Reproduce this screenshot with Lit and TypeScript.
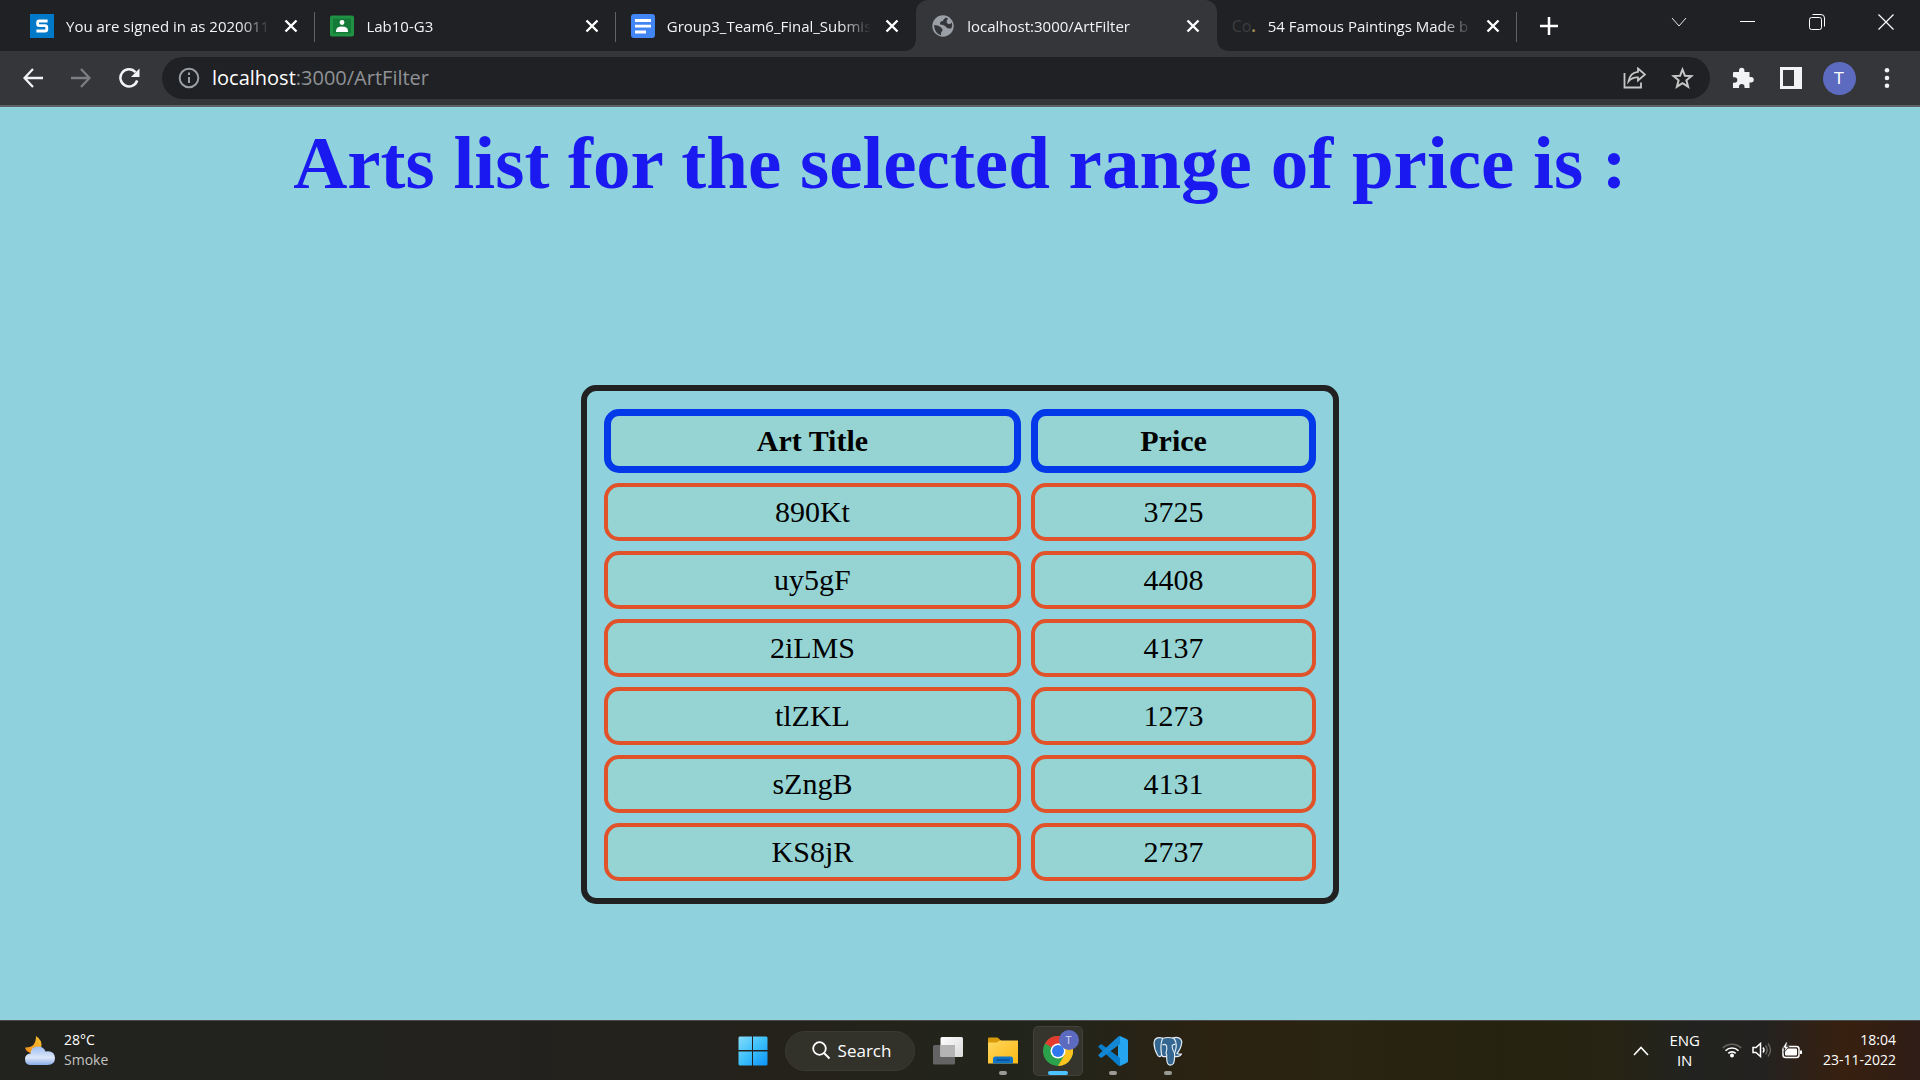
import { LitElement, html, css, svg, TemplateResult } from "lit";
import { customElement, property } from "lit/decorators.js";

const ARTS = [
  { title: "890Kt", price: 3725 },
  { title: "uy5gF", price: 4408 },
  { title: "2iLMS", price: 4137 },
  { title: "tlZKL", price: 1273 },
  { title: "sZngB", price: 4131 },
  { title: "KS8jR", price: 2737 },
];

const icon = (w: number, h: number, body: unknown) =>
  html`<svg width=${w} height=${h} viewBox="0 0 ${w} ${h}" fill="none" aria-hidden="true">${body}</svg>`;

const closeIcon = icon(14, 14, svg`<path d="M1.5 1.5 12.5 12.5M12.5 1.5 1.5 12.5" stroke="#fff" stroke-width="2.4"/>`);

interface Tab { title: string; icon: TemplateResult; active?: boolean; divider?: boolean }

const TABS: Tab[] = [
  {
    title: "You are signed in as 2020011",
    divider: true,
    icon: icon(24, 24, svg`<rect width="24" height="24" fill="#0079c9"/>
      <path d="M17.6 7H9.2Q7.6 7 7.6 8.6V10Q7.6 11.6 9.2 11.6H15Q16.8 11.6 16.8 13.4V15.2Q16.8 17 15 17H6.4" stroke="#fff" stroke-width="2.8"/>`),
  },
  {
    title: "Lab10-G3",
    divider: true,
    icon: icon(24, 24, svg`<rect y="1.500" width="24" height="21" rx="2" fill="#1f9244"/>
      <rect x="3" y="4.500" width="18" height="15" fill="#137a37"/>
      <circle cx="12" cy="8.500" r="2.400" fill="#fff"/><path d="M6 16.500Q6.500 12.500 12 12.500T18 16.500V18H6Z" fill="#fff"/>`),
  },
  {
    title: "Group3_Team6_Final_Submis",
    icon: icon(24, 24, svg`<rect width="24" height="24" rx="3" fill="#4285f4"/>
      <path d="M4 6.500H20M4 12.200H20M4 18H15" stroke="#fff" stroke-width="2.800"/>`),
  },
  {
    title: "localhost:3000/ArtFilter",
    active: true,
    icon: icon(24, 24, svg`<circle cx="12" cy="12" r="10.700" fill="#9aa0a6"/>
      <path d="M3 11Q7 11 9.500 13T11.500 16.500Q9.500 18 10 21.200Q3.500 19.500 3 11ZM15 3.500Q12 5 12 7Q8.500 7 9 10.500Q13.500 10.500 15 13Q16.500 15 20 14.500Q22 12 20.700 8.500Q19 11 16.500 9.500Q14.500 7.500 17 4.500Z" fill="#35363a"/>`),
  },
  {
    title: "54 Famous Paintings Made b",
    divider: true,
    icon: html`<span class="co">Co<b>.</b></span>`,
  },
];

@customElement("browser-tab")
class BrowserTab extends LitElement {
  @property({ attribute: false }) tab!: Tab;

  static styles = css`
    :host { display: block; flex: 1; min-width: 0; }
    .tab {
      position: relative; box-sizing: border-box; height: 51px; padding: 0 17px 0 15px;
      display: flex; align-items: center; gap: 12px; color: #f1f3f4;
      font: 15px/20px "Open Sans", "Noto Sans", sans-serif;
    }
    .active { background: #35363a; border-radius: 12px 12px 0 0; }
    .active::before, .active::after {
      content: ""; position: absolute; bottom: 0; width: 10px; height: 10px;
    }
    .active::before { right: 100%; background: radial-gradient(circle at 0 0, transparent 9px, #35363a 10px); }
    .active::after { left: 100%; background: radial-gradient(circle at 100% 0, transparent 9px, #35363a 10px); }
    .divider::after {
      content: ""; position: absolute; right: 0; top: 12px; width: 1px; height: 30px; background: #5f6368;
    }
    svg { display: block; flex: none; }
    .title {
      flex: 1; min-width: 0; overflow: hidden; white-space: nowrap;
      mask-image: linear-gradient(to right, #000 calc(100% - 32px), transparent calc(100% - 2px));
    }
    .co { flex: none; width: 24px; color: #3c3d40; font-size: 16px; }
    .co b { color: #a08850; }
    button { border: 0; background: none; padding: 0; }
  `;

  render() {
    const { title, icon, active, divider } = this.tab;
    return html`<div class="tab ${active ? "active" : ""} ${divider ? "divider" : ""}">
      ${icon}<span class="title">${title}</span>
      <button aria-label="Close tab">${closeIcon}</button>
    </div>`;
  }
}

@customElement("browser-chrome")
class BrowserChrome extends LitElement {
  static styles = css`
    :host { display: block; font-family: "Open Sans", "Noto Sans", sans-serif; }
    button { border: 0; background: none; padding: 0; display: flex; align-items: center; justify-content: center; }
    svg { display: block; }
    .strip { display: flex; background: #202124; height: 51px; padding-left: 15px; }
    .tabs { display: flex; flex: 0 1 1502px; min-width: 0; }
    .new { width: 64px; padding-top: 1px; }
    .window { margin-left: auto; display: flex; height: 43px; }
    .window button { width: 69px; }
    .bar {
      display: flex; align-items: center; background: #35363a; height: 54px;
      padding-left: 9px; border-bottom: 2px solid #5f6064;
    }
    .nav { width: 48px; height: 48px; }
    .address {
      flex: 1; min-width: 0; display: flex; align-items: center; height: 42px; box-sizing: border-box;
      margin-left: 9px; padding: 0 16px; border-radius: 21px; background: #202124;
      font-size: 20px; line-height: 26px;
    }
    .url { flex: 1; margin-left: 12px; color: #8f9296; white-space: nowrap; }
    .url b { font-weight: 400; color: #fff; }
    .actions { display: flex; gap: 25px; }
    .tools { display: flex; align-items: center; padding: 0 9px; }
    .tools button { width: 48px; height: 42px; }
    .avatar span {
      width: 33px; height: 33px; border-radius: 50%; background: #5c6bc0; color: #fff;
      font-size: 17px; line-height: 33px; text-align: center;
    }
  `;

  render() {
    return html`
      <div class="strip">
        <div class="tabs">${TABS.map((t) => html`<browser-tab .tab=${t}></browser-tab>`)}</div>
        <button class="new" aria-label="New tab">${icon(18, 18, svg`<path d="M9 0V18M0 9H18" stroke="#fff" stroke-width="2.500"/>`)}</button>
        <div class="window">
          <button aria-label="Search tabs">${icon(16, 10, svg`<path d="M1 1 8 9 15 1" stroke="#e8eaed"/>`)}</button>
          <button aria-label="Minimise">${icon(15, 15, svg`<path d="M0 7.500H15" stroke="#fff"/>`)}</button>
          <button aria-label="Restore">${icon(16, 16, svg`<rect x=".5" y="3.500" width="12" height="12" rx="2" stroke="#fff"/><path d="M3.500.5H12Q15.500.5 15.500 4V12.500" stroke="#fff"/>`)}</button>
          <button aria-label="Close">${icon(16, 16, svg`<path d="M.5.5 15.500 15.500M15.500.5.5 15.500" stroke="#fff" stroke-width="1.200"/>`)}</button>
        </div>
      </div>
      <div class="bar">
        <button class="nav" aria-label="Back">${icon(20, 20, svg`<path d="M20 10H1.500M10 1 1.500 10 10 19" stroke="#f1f3f4" stroke-width="2.300"/>`)}</button>
        <button class="nav" aria-label="Forward">${icon(20, 20, svg`<path d="M0 10H18.500M10 1 18.500 10 10 19" stroke="#7d7e82" stroke-width="2.300"/>`)}</button>
        <button class="nav" aria-label="Reload">${icon(21, 20, svg`<path d="M18.200 12.500A8.600 8.600 0 1 1 16.500 4.200" stroke="#f1f3f4" stroke-width="2.500"/><path d="M20.500.5V9H12Z" fill="#f1f3f4"/>`)}</button>
        <div class="address">
          ${icon(22, 22, svg`<circle cx="11" cy="11" r="9.300" stroke="#9aa0a6" stroke-width="2"/><path d="M11 10V16M11 5.500V8" stroke="#9aa0a6" stroke-width="2"/>`)}
          <span class="url"><b>localhost</b>:3000/ArtFilter</span>
          <div class="actions">
            <button aria-label="Share">${icon(23, 22, svg`<path d="M1.500 6V20.500H18V15.500" stroke="#c4c7c5" stroke-width="1.800"/><path d="M15 1.500 22 7.500 15 13.500V10.500Q9.500 10 5.500 14.500Q7 5.500 15 4.800Z" stroke="#c4c7c5" stroke-width="1.800"/>`)}</button>
            <button aria-label="Bookmark">${icon(23, 22, svg`<path d="M11.500 2.500 13.900 8.700 20.500 9.100 15.400 13.300 17.100 19.700 11.500 16.100 5.900 19.700 7.600 13.300 2.500 9.100 9.100 8.700Z" stroke="#c4c7c5" stroke-width="2"/>`)}</button>
          </div>
        </div>
        <div class="tools">
          <button aria-label="Extensions">${icon(22, 22, svg`<path d="M2 5H7V3.500A2.700 2.700 0 0 1 12.400 3.500V5H17.500V10H19A2.700 2.700 0 0 1 19 15.500H17.500V21H12.500V19.800A2.700 2.700 0 0 0 7 19.800V21H1V15.800H2.500A2.700 2.700 0 0 0 2.500 10.200H1V6Q1 5 2 5Z" fill="#f1f3f4"/>`)}</button>
          <button aria-label="Side panel">${icon(22, 22, svg`<path d="M0 0H22V22H0ZM3 3V19H14V3Z" fill="#f1f3f4" fill-rule="evenodd"/>`)}</button>
          <button class="avatar" aria-label="Profile"><span>T</span></button>
          <button aria-label="Menu">${icon(6, 20, svg`<circle cx="3" cy="2.300" r="2.300" fill="#f1f3f4"/><circle cx="3" cy="10" r="2.300" fill="#f1f3f4"/><circle cx="3" cy="17.700" r="2.300" fill="#f1f3f4"/>`)}</button>
        </div>
      </div>`;
  }
}

@customElement("art-page")
class ArtPage extends LitElement {
  static styles = css`
    :host {
      display: block; background: #8fd1dc; color: #000;
      font-family: "Liberation Serif", "Times New Roman", serif;
    }
    h1 { margin: 0; padding-top: 13px; color: #1919f0; font-size: 75px; line-height: 86px; text-align: center; }
    table {
      box-sizing: border-box; width: 39.5%; margin: 179px auto 0; padding: 8px 7px 7px;
      border: 6px solid #212121; border-radius: 15px; border-collapse: separate; border-spacing: 10px;
      font-size: 30px; line-height: 34px; text-align: center;
    }
    .title { width: 59.4%; }
    th, td { background: #96d4d4; border-radius: 15px; padding: 8px; }
    th { border: 7px solid #0439ea; }
    td { border: 4px solid #e0522a; }
  `;

  render() {
    return html`
      <h1>Arts list for the selected range of price is :</h1>
      <table>
        <thead><tr><th class="title" scope="col">Art Title</th><th scope="col">Price</th></tr></thead>
        <tbody>${ARTS.map((a) => html`<tr><td>${a.title}</td><td>${a.price}</td></tr>`)}</tbody>
      </table>`;
  }
}

@customElement("task-bar")
class TaskBar extends LitElement {
  static styles = css`
    :host {
      display: grid; grid-template-columns: 1fr auto 1fr; align-items: center; box-sizing: border-box; height: 60px;
      padding: 0 24px; border-top: 1px solid #4a4a46; color: #fff;
      font: 14px/20px "Open Sans", "Noto Sans", sans-serif;
      background: linear-gradient(to right, #22231f 0%, #22211d 28%, #24221a 42%, #22251b 54%, #2b2212 63%, #2a2412 70%,
        #25230f 78%, #272414 84%, #222320 88%, #242220 92%, #38200f 96%, #2e1c16 100%);
    }
    svg { display: block; flex: none; }
    button { border: 0; background: none; padding: 0; color: inherit; font: inherit; }
    .weather { justify-self: start; display: flex; align-items: center; gap: 9px; text-align: left; }
    .muted { color: #c4c4c2; }
    .lines { padding-bottom: 2px; }
    .lines span { display: block; }
    .apps { display: flex; align-items: center; gap: 5px; }
    .app {
      position: relative; box-sizing: border-box; width: 50px; height: 50px; border-radius: 5px;
      display: flex; align-items: center; justify-content: center;
    }
    .app.open::after {
      content: ""; position: absolute; bottom: 1px; left: 21px; width: 8px; height: 4px; border-radius: 2px; background: #9b9a96;
    }
    .app.current { background: #36352d; border: 1px solid #42413a; }
    .app.current::after { bottom: 0; left: 14px; width: 20px; background: #4cc2ff; }
    .badge {
      position: absolute; right: 3px; top: 3px; width: 20px; height: 20px; border-radius: 50%;
      background: #5c6bc0; color: #d5d9f2; font-size: 11px; line-height: 20px; text-align: center;
    }
    .search {
      display: flex; align-items: center; justify-content: center; gap: 7px; box-sizing: border-box; width: 130px; height: 40px;
      padding-left: 4px; margin: 0 3px 0 2px; border: 1px solid #3a3a33; border-radius: 20px; background: #32322b; font-size: 17px;
    }
    .tray { justify-self: end; display: flex; align-items: center; }
    .lang { margin: 0 22px 0 20px; font-size: 15px; text-align: center; }
    .status { display: flex; gap: 10px; margin-right: 21px; }
    .clock { text-align: right; }
  `;

  render() {
    return html`
      <button class="weather">
        ${icon(31, 30, svg`
          <defs><linearGradient id="moon" x1="1" y1="0" x2="0" y2="1"><stop stop-color="#f4c430"/><stop offset="1" stop-color="#f08a1c"/></linearGradient>
          <linearGradient id="cloud" x1="0" y1="0" x2="0" y2="1"><stop stop-color="#9dbcf2"/><stop offset=".6" stop-color="#dde7f8"/><stop offset="1" stop-color="#88aaea"/></linearGradient></defs>
          <path d="M12 0Q18 4 17.500 10Q16 17 8 17.500Q2 16 1 11.500Q12 12 12 0Z" fill="url(#moon)"/>
          <path d="M7 29Q1 29 1 23Q1 18 6.500 17.500Q7 10.500 14 10.500Q19.500 10.500 21.500 15.500Q30.500 14 31 22Q31 29 23.500 29Z" fill="url(#cloud)"/>`)}
        <div class="lines"><span>28°C</span><span class="muted">Smoke</span></div>
      </button>
      <div class="apps">
        <button class="app" aria-label="Start">${icon(30, 30, svg`
          <defs><linearGradient id="win" x1="0" y1="0" x2="1" y2="1"><stop stop-color="#86dcfb"/><stop offset=".5" stop-color="#3cc0fb"/><stop offset="1" stop-color="#0c92f8"/></linearGradient></defs>
          <path d="M1.500.5H14V14H.5V1.500ZM15 .5H28.500L29.500 1.500V14H15ZM.5 15.500H14V29.500H1.500L.5 28.500ZM15 15.500H29.500V28.500L28.500 29.500H15Z" fill="url(#win)"/>`)}</button>
        <button class="search">${icon(19, 19, svg`<circle cx="7.500" cy="7.500" r="6.300" stroke="#fff" stroke-width="1.800"/><path d="M12 12 17.500 17.500" stroke="#fff" stroke-width="2"/>`)}<span>Search</span></button>
        <button class="app" aria-label="Task view">${icon(30, 28, svg`
          <defs><linearGradient id="tv" x1="0" y1="0" x2="1" y2="1"><stop stop-color="#fff"/><stop offset="1" stop-color="#d8d8d8"/></linearGradient></defs>
          <rect y="8" width="22" height="19.500" rx="1.500" fill="#646464"/><rect x="7.500" y="0" width="22.500" height="20" rx="1.500" fill="url(#tv)"/><path d="M7.500 8H22V20H7.500Z" fill="#b4b4b4"/>`)}</button>
        <button class="app open" aria-label="File Explorer">${icon(30, 27, svg`
          <defs><linearGradient id="fold" x1="0" y1="0" x2="1" y2="1"><stop stop-color="#ffd75e"/><stop offset="1" stop-color="#fcb813"/></linearGradient></defs>
          <path d="M0 1.500Q0 .5 1 .5H9.500L13 3.500V8H0Z" fill="#d99a0a"/><path d="M0 5.500H8.500L12 3.500H30V26.500H0Z" fill="url(#fold)"/>
          <path d="M5 26.500V22Q5 19.500 7.500 19.500H22.500Q25 19.500 25 22V26.500Z" fill="#0f74c8"/><path d="M9 23H21" stroke="#0a4f92" stroke-width="1.500" stroke-linecap="round"/>`)}</button>
        <button class="app open current" aria-label="Chrome">${icon(30, 30, svg`
          <circle cx="15" cy="15" r="15" fill="#2da24c"/><path d="M15 15 2 7.500A15 15 0 0 1 28 7.500Z" fill="#e33b2e"/>
          <path d="M15 7.500H28A15 15 0 0 1 15 30L21.500 18.700Z" fill="#fcc31e"/>
          <circle cx="15" cy="15" r="7.500" fill="#fff"/><circle cx="15" cy="15" r="6" fill="#2f78ee"/>`)}<span class="badge">T</span></button>
        <button class="app open" aria-label="Visual Studio Code">${icon(30, 30, svg`
          <path d="M22 0 29 3.300Q30 3.800 30 5V25Q30 26.200 29 26.700L22 30 20 28.500V1.500Z" fill="#25a5f0"/>
          <path d="M22 30Q20.800 30 20 29.200L.7 11.600Q0 10.800.7 10.100L2.500 8.500Q3.200 8 4 8.500L22 22Z" fill="#0a7dca"/>
          <path d="M22 0Q20.800 0 20 .8L.7 18.400Q0 19.200.7 19.900L2.500 21.500Q3.200 22 4 21.500L22 8Z" fill="#1487d4"/>`)}</button>
        <button class="app open" aria-label="pgAdmin">${icon(30, 30, svg`
          <g fill="#336791" stroke="#e4ecf2" stroke-width="1.200" stroke-linejoin="round">
          <path d="M9.500 2Q2 0 1 6.500Q1 13 4.500 19Q6 21.500 8 20L11 16.500Z"/>
          <path d="M19.500 2Q27.500 0 28.800 5.500Q28.500 12 24 17.500Q26.500 18.500 28.500 18Q26.500 21.500 21.500 20.500L19 16.500Z"/>
          <path d="M9.500 2.500Q15 .5 21 2.500Q24 6 23 12Q22.500 15 21.500 17Q22 24 20.500 27.500Q18.500 30 15.500 28.500Q13.500 27 13.700 20.500Q8.500 21.500 8.500 18Q7 8 9.500 2.500Z"/></g>
          <path d="M9.500 9Q11.500 7.500 13.500 9.500Q14.500 13 13 17L14 20M22.500 8.500Q20 8 19 10Q19 13 21.500 17" stroke="#e4ecf2" stroke-width="1.100"/>`)}</button>
      </div>
      <div class="tray">
        <button aria-label="Show hidden icons">${icon(16, 10, svg`<path d="M1 9 8 1.500 15 9" stroke="#fff" stroke-width="1.600"/>`)}</button>
        <button class="lang lines"><span>ENG</span><span>IN</span></button>
        <div class="status">
          ${icon(20, 16, svg`<g stroke-width="1.600" fill="none"><path d="M.8 6A13 13 0 0 1 19.200 6" stroke="#66665f"/><path d="M3.500 8.700A9.200 9.200 0 0 1 16.500 8.700M6.300 11.400A5.300 5.300 0 0 1 13.700 11.400" stroke="#fff"/></g><circle cx="10" cy="13.500" r="2" fill="#fff"/>`)}
          ${icon(20, 16, svg`<path d="M1 5.500H4L8.500 1.500V14.500L4 10.500H1Z" stroke="#fff" stroke-width="1.500"/><path d="M11 5.500Q13 8 11 10.500" stroke="#fff" stroke-width="1.500"/><path d="M13.500 3.500Q17 8 13.500 12.500M16 1.500Q21 8 16 14.500" stroke="#66665f" stroke-width="1.400"/>`)}
          ${icon(20, 17, svg`<rect x="1" y="4.500" width="16" height="11" rx="2.500" stroke="#fff" stroke-width="1.500"/><rect x="3" y="6.500" width="12" height="7" rx="1" fill="#fff"/><path d="M18 8.500H20V12H18Z" fill="#fff"/><path d="M4 0 .5 6H3L2 10.500 7 4.500H4.500L5.500 0Z" fill="#fff" stroke="#222" stroke-width=".8"/>`)}
        </div>
        <button class="clock lines"><span>18:04</span><span>23-11-2022</span></button>
      </div>`;
  }
}

@customElement("app-root")
class AppRoot extends LitElement {
  static styles = css`
    :host { display: flex; flex-direction: column; min-height: 100vh; }
    art-page { flex: 1; }
  `;

  render() {
    return html`<browser-chrome></browser-chrome><art-page></art-page><task-bar></task-bar>`;
  }
}
